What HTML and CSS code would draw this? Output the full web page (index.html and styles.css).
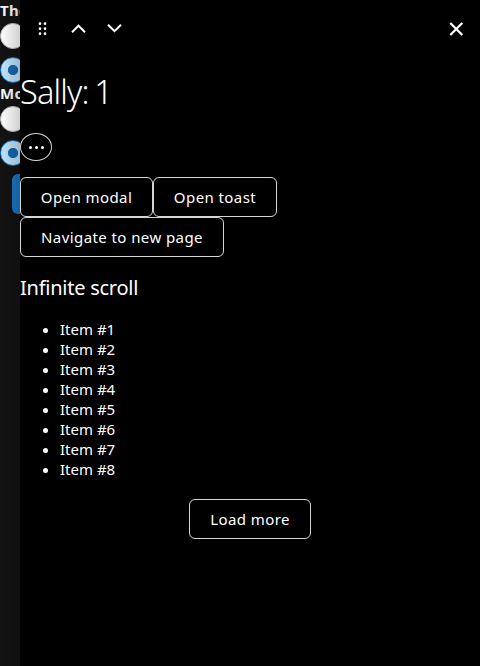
FILE: index.html
```html
<!DOCTYPE html>
<html lang="en">
<head>
<meta charset="utf-8">
<title>Sally: 1</title>
<link rel="stylesheet" href="styles.css">
</head>
<body>
<main class="page">
  <p class="legend first">The</p>
  <span class="radio"></span>
  <span class="radio checked"></span>
  <p class="legend">Mo</p>
  <span class="radio"></span>
  <span class="radio checked"></span>
  <span class="primary"></span>
</main>
<aside class="drawer">
  <header class="bar">
    <svg class="icon" viewBox="0 0 36 36"><g fill="#fff"><circle cx="14" cy="11.7" r="1.35"/><circle cx="19" cy="11.7" r="1.35"/><circle cx="14" cy="16.7" r="1.35"/><circle cx="19" cy="16.7" r="1.35"/><circle cx="14" cy="21.7" r="1.35"/><circle cx="19" cy="21.7" r="1.35"/></g></svg>
    <svg class="icon" viewBox="0 0 36 36"><path class="line" d="M10 20.2 16.5 13.7 23 20.2"/></svg>
    <svg class="icon" viewBox="0 0 36 36"><path class="line" d="M10 12.7 16.5 19.2 23 12.7"/></svg>
    <svg class="icon close" viewBox="0 0 36 36"><path class="line cross" d="M11.3 11 23.3 23M23.3 11 11.3 23"/></svg>
  </header>
  <h1 class="title">Sally: <span class="count">1</span></h1>
  <button class="more" aria-label="More"><i></i><i></i><i></i></button>
  <div class="actions">
    <button class="button modal">Open modal</button>
    <button class="button toast">Open toast</button>
    <button class="button navigate">Navigate to new page</button>
  </div>
  <h2 class="subtitle">Infinite scroll</h2>
  <ul class="items">
    <li>Item #1</li><li>Item #2</li><li>Item #3</li><li>Item #4</li>
    <li>Item #5</li><li>Item #6</li><li>Item #7</li><li>Item #8</li>
  </ul>
  <button class="button load">Load more</button>
</aside>
</body>
</html>
```
FILE: styles.css
```css
* { box-sizing: border-box; }
body {
  margin: 0;
  height: 666px;
  display: grid;
  grid-template-columns: 20px 460px;
  overflow: hidden;
  background: #000;
  color: #fff;
  font: 15px/20px "Noto Sans", sans-serif;
}
.page {
  position: relative;
  overflow: hidden;
  background: #131313;
}
.page::after {
  content: "";
  position: absolute;
  inset: 0;
  background: linear-gradient(90deg, transparent, rgba(0, 0, 0, .18));
}
.legend { margin: 0; font-weight: 700; font-size: 15px; letter-spacing: .3px; }
.legend.first { height: 23px; line-height: 20px; }
.first ~ .legend { height: 23px; margin-top: -4px; line-height: 20px; }
.radio {
  display: block;
  width: 26px;
  height: 26px;
  margin-bottom: 8px;
  border: 1px solid #bbb;
  border-radius: 50%;
  background: #fff;
}
.radio.checked {
  margin-bottom: 4px;
  border-color: #1976c5;
  background: radial-gradient(circle, #1768b0 0 4.7px, #bfe5ff 5.5px);
}
.primary { display: block; width: 60px; height: 40px; margin: 8px 0 0 12px; border-radius: 6px; background: #1976c5; }
.drawer { display: flex; flex-direction: column; align-items: flex-start; background: #000; }
.bar { display: flex; width: 100%; height: 56px; padding: 12px 5px 0 6px; }
.icon { width: 36px; height: 36px; }
.close { margin-left: auto; }
.line { fill: none; stroke: #fff; stroke-width: 2; }
.cross { stroke-width: 2.3; }
.title { margin: 12px 0 0; height: 48px; font: 300 32.5px/48px "Noto Sans", sans-serif; letter-spacing: -.8px; }
.count { margin-left: -2px; }
.more {
  display: flex;
  align-items: center;
  justify-content: center;
  gap: 3px;
  width: 32px;
  height: 28px;
  margin-top: 17px;
  padding: 0;
  border: 1px solid #d5d5d5;
  border-radius: 50%;
  background: #000;
}
.more i { width: 3px; height: 3px; border-radius: 50%; background: #fff; }
.actions { display: flex; flex-wrap: wrap; width: 300px; margin-top: 16px; }
.button {
  height: 40px;
  padding: 0;
  border: 1px solid #d5d5d5;
  border-radius: 6px;
  background: #000;
  color: #fff;
  font: 15px/20px "Noto Sans", sans-serif;
  letter-spacing: .42px;
  white-space: nowrap;
}
.modal { width: 133px; }
.toast { width: 124px; }
.navigate { width: 204px; }
.load { width: 122px; align-self: center; margin-top: 20px; }
.subtitle { margin: 19px 0 0; font: 400 20px/24px "Noto Sans", sans-serif; letter-spacing: -.25px; }
.items { margin: 19px 0 0; padding-left: 40px; }
```
